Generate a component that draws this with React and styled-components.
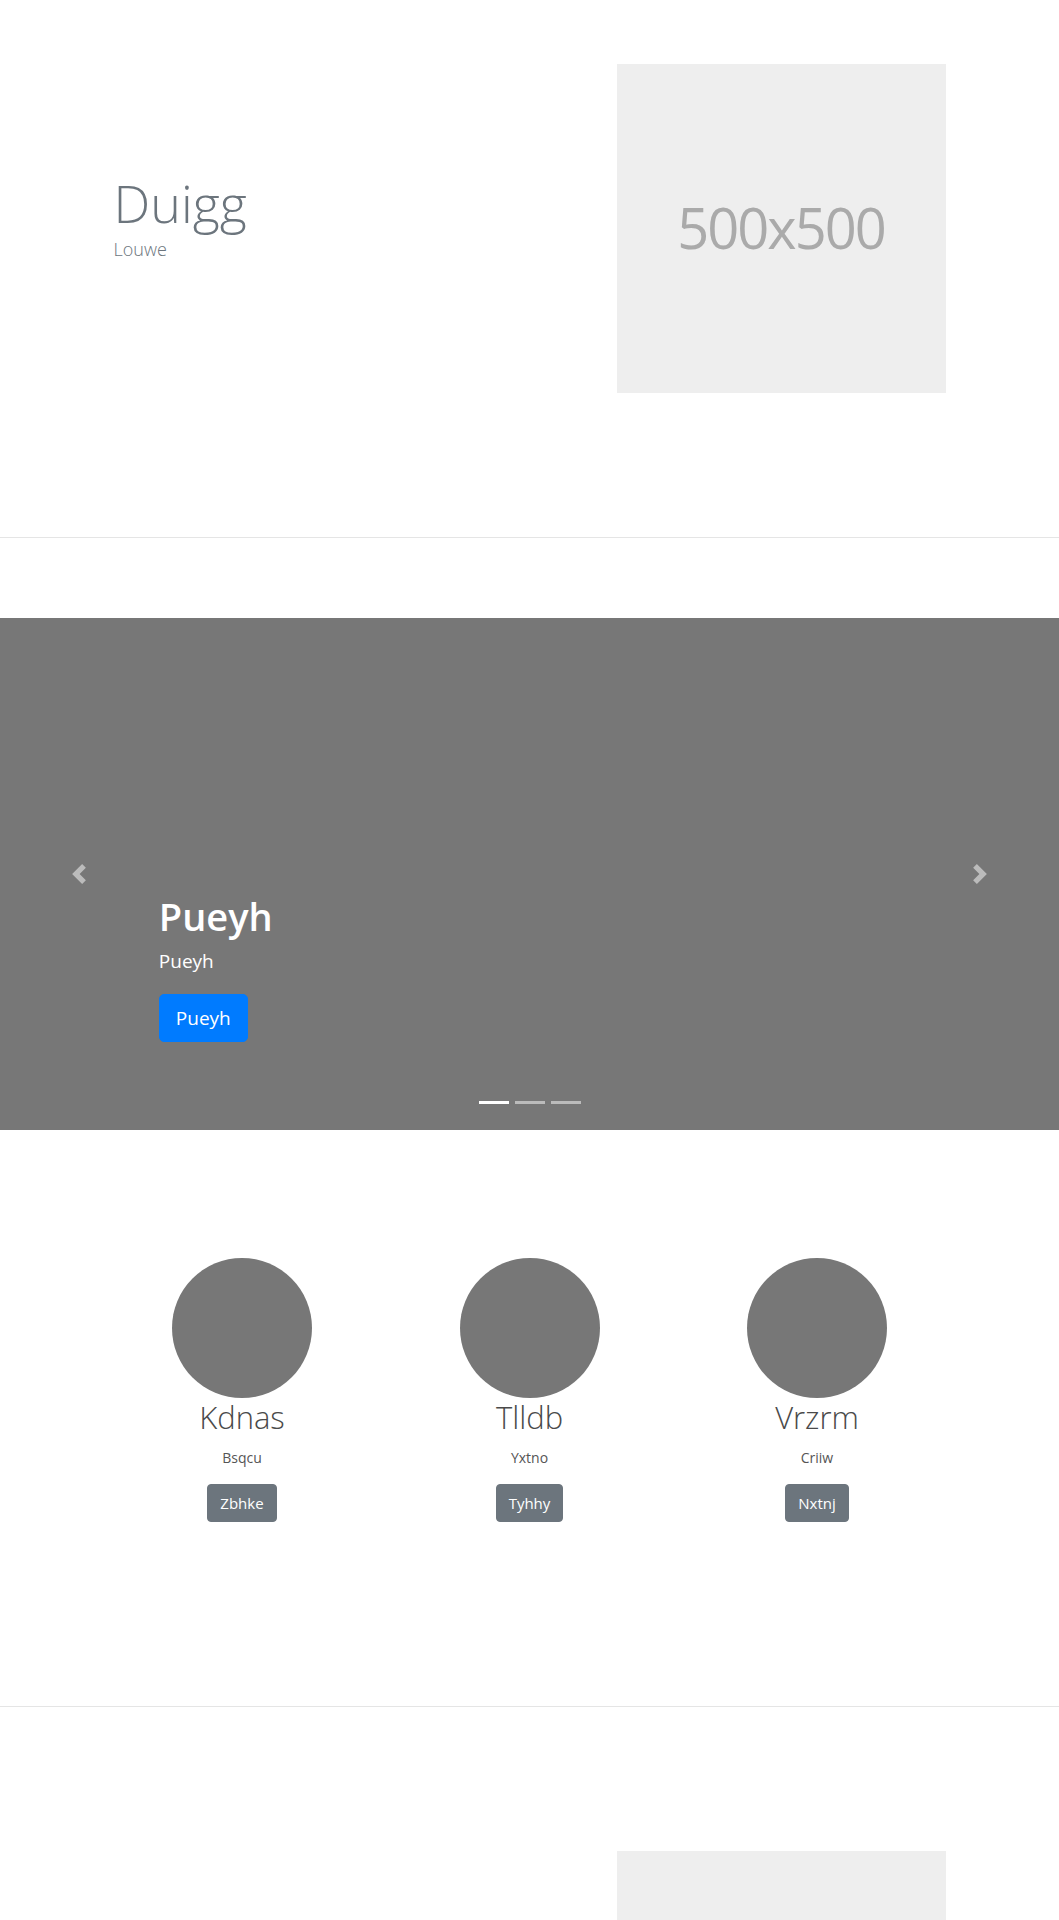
import React from 'react';
import styled, { createGlobalStyle } from 'styled-components';

const GlobalStyle = createGlobalStyle`
  * { box-sizing: border-box; }
  body {
    margin: 0;
    background: #fff;
    font-family: "Open Sans", "Noto Sans", Arial, sans-serif;
    color: #212529;
  }
`

const features = [
  { name: 'Kdnas', sub: 'Bsqcu', action: 'Zbhke' },
  { name: 'Tlldb', sub: 'Yxtno', action: 'Tyhhy' },
  { name: 'Vrzrm', sub: 'Criiw', action: 'Nxtnj' },
]

function Chevron({ dir }) {
  const d = dir === 'prev'
    ? 'M5.25 0l-4 4 4 4 1.5-1.5L4.25 4l2.5-2.5L5.25 0z'
    : 'M2.75 0l-1.5 1.5L3.75 4l-2.5 2.5L2.75 8l4-4-4-4z'
  return (
    <svg width="20" height="20" viewBox="0 0 8 8" fill="#fff">
      <path d={d} />
    </svg>
  )
}

function Hero({ title, lead, top }) {
  return (
    <HeroSection $top={top}>
      <HeroRow>
        <HeroText>
          {title && <HeroTitle>{title}</HeroTitle>}
          {lead && <HeroLead>{lead}</HeroLead>}
        </HeroText>
        <Placeholder>500x500</Placeholder>
      </HeroRow>
    </HeroSection>
  )
}

export default function App() {
  return (
    <>
      <GlobalStyle />
      <Hero title="Duigg" lead="Louwe" top={64} />
      <Divider />
      <Carousel>
        <Slide>
          <CaptionTitle>Pueyh</CaptionTitle>
          <CaptionText>Pueyh</CaptionText>
          <PrimaryButton>Pueyh</PrimaryButton>
        </Slide>
        <Control $side="left"><Chevron dir="prev" /></Control>
        <Control $side="right"><Chevron dir="next" /></Control>
        <Indicators>
          <Indicator $active />
          <Indicator />
          <Indicator />
        </Indicators>
      </Carousel>
      <Features>
        {features.map((f) => (
          <Feature key={f.name}>
            <Avatar />
            <FeatureName>{f.name}</FeatureName>
            <FeatureSub>{f.sub}</FeatureSub>
            <SecondaryButton>{f.action}</SecondaryButton>
          </Feature>
        ))}
      </Features>
      <Divider />
      <Hero top={144} />
    </>
  )
}

const HeroSection = styled.section`
  padding: ${({ $top }) => $top}px 0 144px;
`
const HeroRow = styled.div`
  width: 960px;
  margin: 0 auto;
  display: grid;
  grid-template-columns: 1fr 1fr;
`
const HeroText = styled.div`
  padding: 108px 0 0 64px;
`
const HeroTitle = styled.h1`
  margin: 0 0 2px;
  font-size: 52px;
  font-weight: 300;
  line-height: 1.2;
  color: #6c757d;
`
const HeroLead = styled.p`
  margin: 0;
  font-size: 18px;
  font-weight: 300;
  line-height: 1.5;
  color: #6c757d;
`
const Placeholder = styled.div`
  width: 329px;
  height: 329px;
  margin-left: 87px;
  background: #eee;
  color: #aaa;
  display: flex;
  align-items: center;
  justify-content: center;
  font-size: 56px;
  letter-spacing: -2px;
  padding-bottom: 4px;
`
const Divider = styled.hr`
  margin: 0;
  border: 0;
  border-top: 1px solid #e5e5e5;
`
const Carousel = styled.div`
  position: relative;
  margin-top: 80px;
  height: 512px;
  background: #777;
  overflow: hidden;
`
const Slide = styled.div`
  height: 100%;
  display: flex;
  flex-direction: column;
  justify-content: flex-end;
  align-items: flex-start;
  padding: 0 15% 88px;
  color: #fff;
`
const CaptionTitle = styled.h1`
  margin: 0 0 7px;
  font-size: 38px;
  font-weight: 600;
  line-height: 1.2;
`
const CaptionText = styled.p`
  margin: 0 0 19px;
  font-size: 19px;
  line-height: 1.5;
`
const PrimaryButton = styled.a`
  display: inline-block;
  padding: 8px 16px;
  font-size: 19px;
  line-height: 30px;
  color: #fff;
  background: #007bff;
  border: 1px solid #007bff;
  border-radius: 5px;
`
const Control = styled.div`
  position: absolute;
  top: 0;
  bottom: 0;
  ${({ $side }) => $side}: 0;
  width: 15%;
  display: flex;
  align-items: center;
  justify-content: center;
  opacity: 0.5;
`
const Indicators = styled.ol`
  position: absolute;
  left: 0;
  right: 0;
  bottom: 26px;
  margin: 0;
  padding: 0;
  list-style: none;
  display: flex;
  justify-content: center;
  gap: 6px;
`
const Indicator = styled.li`
  width: 30px;
  height: 3px;
  background: #fff;
  opacity: ${({ $active }) => ($active ? 1 : 0.5)};
`
const Features = styled.section`
  width: 862.5px;
  margin: 0 auto;
  padding: 128px 0 184px;
  display: grid;
  grid-template-columns: repeat(3, 1fr);
`
const Feature = styled.div`
  display: flex;
  flex-direction: column;
  align-items: center;
`
const Avatar = styled.div`
  width: 140px;
  height: 140px;
  border-radius: 50%;
  background: #777;
`
const FeatureName = styled.h2`
  margin: 1px 0 11px;
  font-size: 31px;
  font-weight: 300;
  line-height: 1.2;
  color: #4a4a4a;
`
const FeatureSub = styled.p`
  margin: 0 0 16px;
  font-size: 14px;
  line-height: 1.5;
  color: #555;
`
const SecondaryButton = styled.a`
  display: inline-block;
  padding: 6px 12px;
  font-size: 15px;
  line-height: 24px;
  color: #fff;
  background: #6c757d;
  border: 1px solid #6c757d;
  border-radius: 4px;
`
